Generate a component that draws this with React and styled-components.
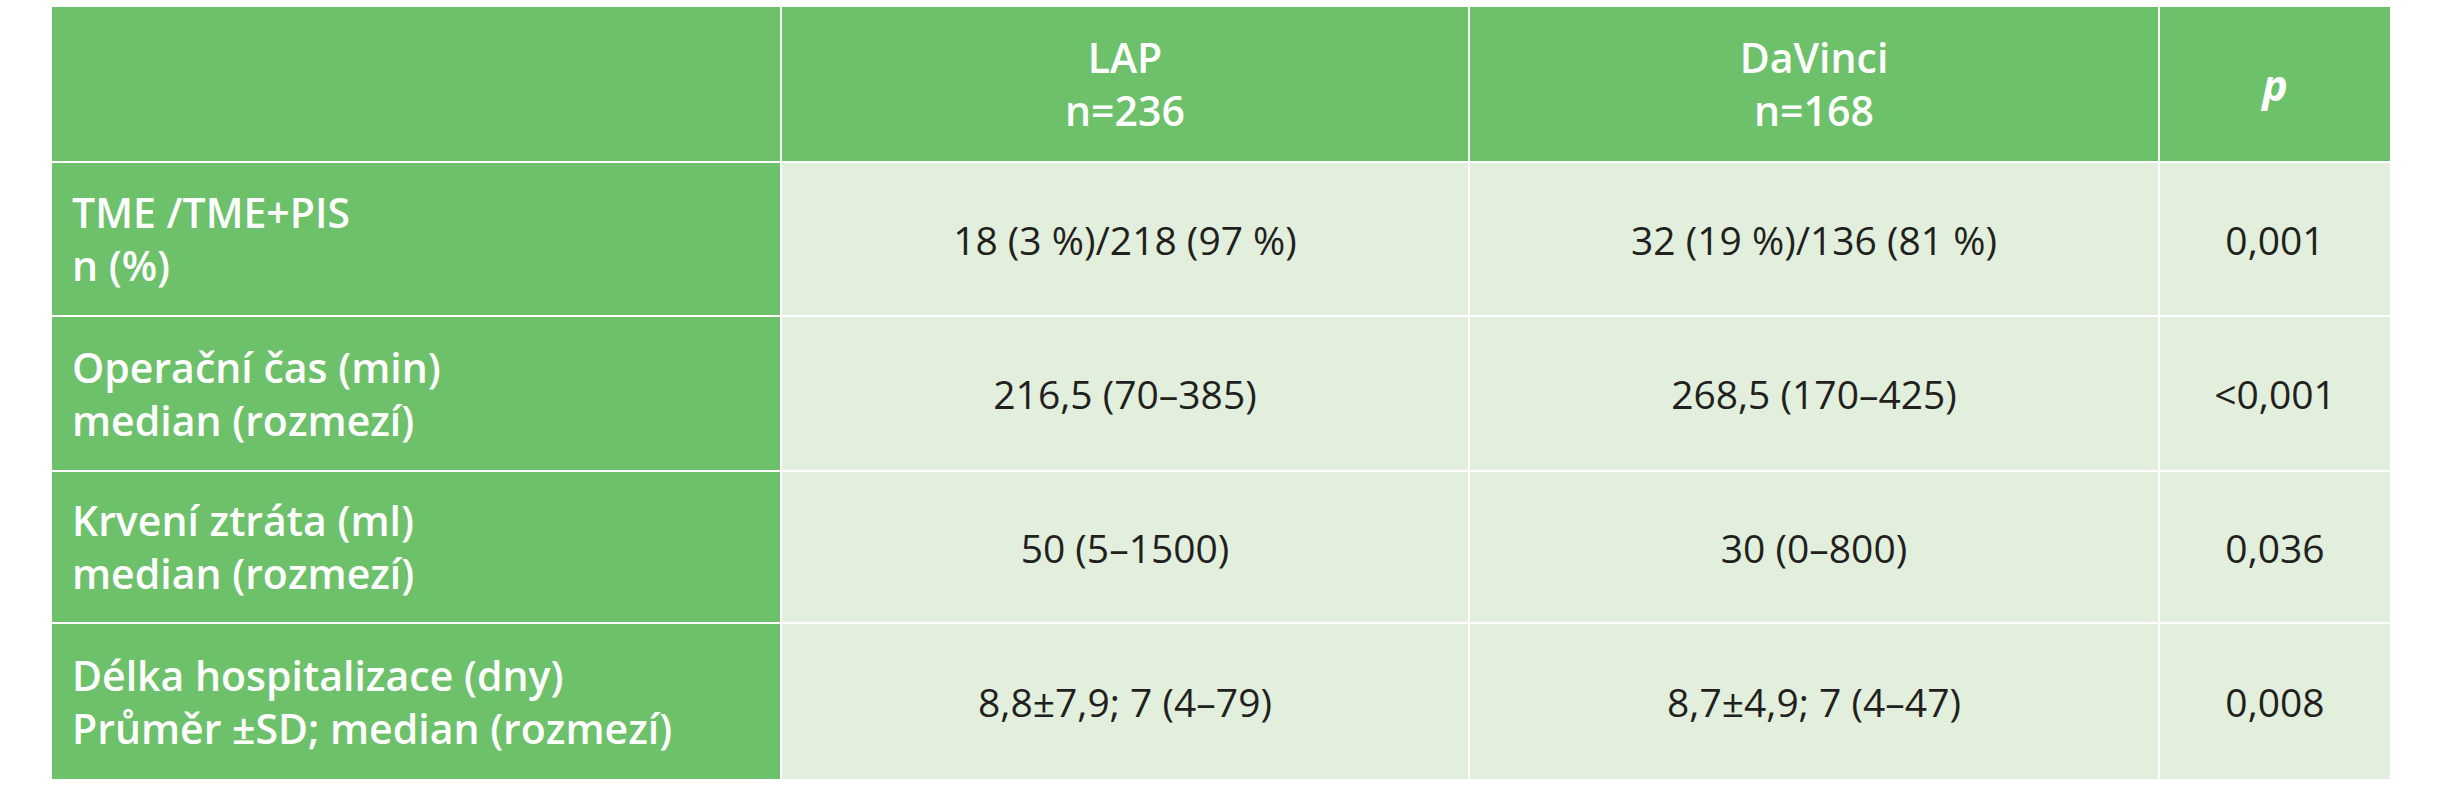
import React from "react";
import styled, { createGlobalStyle } from "styled-components";

const Global = createGlobalStyle`
  html, body {
    margin: 0;
    padding: 0;
    background: #fff;
  }
  body {
    font-family: "Open Sans", "Noto Sans", sans-serif;
  }
`;

const Page = styled.div`
  padding: 7px 0 0 52px;
`;

const Table = styled.div`
  display: grid;
  grid-template-columns: 728px 686px 688px 230px;
  grid-template-rows: 154px 152px 153px 150px 155px;
  gap: 2px;
  width: max-content;
  background: #fff;
`;

const Cell = styled.div`
  display: flex;
  flex-direction: column;
  justify-content: center;
  align-items: ${(p) => (p.$left ? "flex-start" : "center")};
  text-align: ${(p) => (p.$left ? "left" : "center")};
  padding: ${(p) => (p.$left ? "0 20px" : "0")};
  background: ${(p) => (p.$head ? "#6dc16a" : "#e1efdc")};
  color: ${(p) => (p.$head ? "#fff" : "#231f20")};
  font-size: ${(p) => (p.$head ? "41px" : "39px")};
  font-weight: ${(p) => (p.$head ? 600 : 400)};
  line-height: ${(p) => (p.$head ? "53px" : "normal")};
  white-space: nowrap;
`;

const Italic = styled.span`
  font-style: italic;
  font-weight: 700;
  font-size: 43px;
`;

const rows = [
  {
    label: ["TME /TME+PIS", "n (%)"],
    lap: "18 (3 %)/218 (97 %)",
    dv: "32 (19 %)/136 (81 %)",
    p: "0,001",
  },
  {
    label: ["Operační čas (min)", "median (rozmezí)"],
    lap: "216,5 (70–385)",
    dv: "268,5 (170–425)",
    p: "<0,001",
  },
  {
    label: ["Krvení ztráta (ml)", "median (rozmezí)"],
    lap: "50 (5–1500)",
    dv: "30 (0–800)",
    p: "0,036",
  },
  {
    label: ["Délka hospitalizace (dny)", "Průměr ±SD; median (rozmezí)"],
    lap: "8,8±7,9; 7 (4–79)",
    dv: "8,7±4,9; 7 (4–47)",
    p: "0,008",
  },
];

export default function App() {
  return (
    <>
      <Global />
      <Page>
        <Table>
          <Cell $head />
          <Cell $head>
            <div>LAP</div>
            <div>n=236</div>
          </Cell>
          <Cell $head>
            <div>DaVinci</div>
            <div>n=168</div>
          </Cell>
          <Cell $head>
            <Italic>p</Italic>
          </Cell>
          {rows.map((r) => (
            <React.Fragment key={r.p + r.lap}>
              <Cell $head $left>
                <div>{r.label[0]}</div>
                <div>{r.label[1]}</div>
              </Cell>
              <Cell>{r.lap}</Cell>
              <Cell>{r.dv}</Cell>
              <Cell>{r.p}</Cell>
            </React.Fragment>
          ))}
        </Table>
      </Page>
    </>
  );
}
